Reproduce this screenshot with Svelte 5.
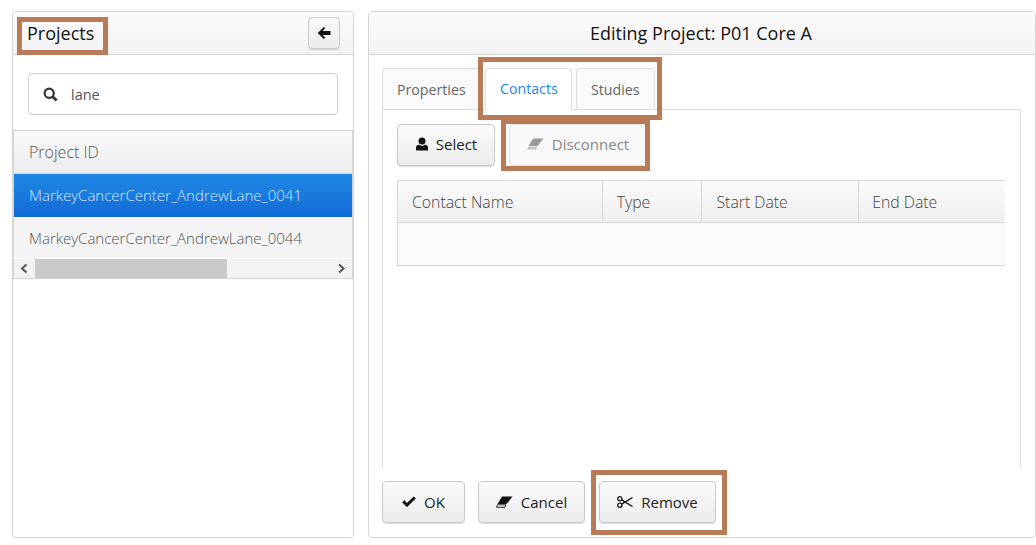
<script>
  const columns = [
    { name: 'Contact Name', width: 205 },
    { name: 'Type', width: 99 },
    { name: 'Start Date', width: 158 },
    { name: 'End Date', width: 146 }
  ];
</script>

<div class="page">
  <section class="panel left">
    <header class="head">
      <h2 class="title-left">Projects</h2>
      <button class="btn back" aria-label="Back">
        <svg width="14" height="14" viewBox="0 0 14 14"><path d="M7 0.8 L0.8 7 L7 13.2 L8 11.6 L5.6 9 L13.5 9 L13.5 5 L5.6 5 L8 2.4 Z" fill="#111"/></svg>
      </button>
    </header>
    <div class="search">
      <svg width="15" height="15" viewBox="0 0 15 15" fill="none" stroke="#333"><circle cx="6.2" cy="6.2" r="4.6" stroke-width="2.2"/><path d="M9.6 9.6 L13.6 13.6" stroke-width="2.8"/></svg>
      <span>lane</span>
    </div>
    <div class="grid">
      <div class="grid-head">Project ID</div>
      <div class="grid-row selected">MarkeyCancerCenter_AndrewLane_0041</div>
      <div class="grid-row plain">MarkeyCancerCenter_AndrewLane_0044</div>
      <div class="scroll">
        <svg width="21" height="19" viewBox="0 0 21 19" fill="none" stroke="#555" stroke-width="2"><path d="M12.5 5.5 L8 9.5 L12.5 13.5"/></svg>
        <div class="thumb"></div>
        <svg class="next" width="22" height="19" viewBox="0 0 22 19" fill="none" stroke="#555" stroke-width="2"><path d="M9 5.5 L13.5 9.5 L9 13.5"/></svg>
      </div>
    </div>
  </section>

  <section class="panel right">
    <header class="head center"><h2>Editing Project: P01 Core A</h2></header>
    <div class="body">
      <nav class="tabs">
        <div class="tab first">Properties</div>
        <div class="tab active">Contacts</div>
        <div class="tab">Studies</div>
      </nav>
      <div class="content">
        <div class="toolbar">
          <button class="btn tool select">
            <svg width="14" height="14" viewBox="0 0 14 14" fill="#111"><circle cx="7" cy="4" r="3.5"/><path d="M1 13.5 V10.5 Q1 8.2 4 7.8 L7 9 L10 7.8 Q13 8.2 13 10.5 V13.5 Z"/></svg>
            Select
          </button>
          <button class="btn tool disabled">
            <svg width="17" height="12" viewBox="0 0 17 12" fill="#999"><path d="M6 0.5 H16.5 L10.5 8 H1.5 Z"/><path d="M1.2 8.8 H10.2 L9 11.5 H0.3 Z" opacity=".6"/></svg>
            Disconnect
          </button>
        </div>
        <div class="table">
          <div class="thead">
            {#each columns as c}
              <div class="th" style="width:{c.width}px">{c.name}</div>
            {/each}
          </div>
          <div class="tbody"></div>
        </div>
      </div>
      <footer class="actions">
        <button class="btn foot ok">
          <svg width="14" height="11" viewBox="0 0 14 11" fill="none" stroke="#111" stroke-width="3"><path d="M1.2 5.2 L5 9 L12.8 1.5"/></svg>
          OK
        </button>
        <button class="btn foot cancel">
          <svg width="17" height="12" viewBox="0 0 17 12" fill="#111"><path d="M6 0.5 H16.5 L10.5 8 H1.5 Z"/><path d="M1.4 8.8 H10 L8.9 11.3 H0.6 Z" fill="none" stroke="#111" stroke-width=".9"/></svg>
          Cancel
        </button>
        <button class="btn foot remove">
          <svg width="16" height="12" viewBox="0 0 16 12" fill="none" stroke="#111" stroke-width="1.3"><circle cx="2.8" cy="2.8" r="2.1"/><circle cx="2.8" cy="9.2" r="2.1"/><path d="M4.6 3.9 L15.5 10.5 M4.6 8.1 L15.5 1.5"/></svg>
          Remove
        </button>
      </footer>
    </div>
  </section>

  <div class="mark m1"></div>
  <div class="mark m2"></div>
  <div class="mark m3"></div>
  <div class="mark m4"></div>
</div>

<style>
  :global(body) { margin: 0; background: #fff; }
  .page {
    position: relative;
    width: 1036px;
    height: 545px;
    box-sizing: border-box;
    padding: 11px 0 0 12px;
    display: flex;
    gap: 14px;
    overflow: hidden;
    font-family: "Open Sans", sans-serif;
    color: #333;
  }
  .panel {
    box-sizing: border-box;
    height: 527px;
    border: 1px solid #d5d5d5;
    border-radius: 4px;
    background: #fff;
    overflow: hidden;
  }
  .left { width: 342px; }
  .right { width: 668px; }
  .head {
    box-sizing: border-box;
    height: 43px;
    display: flex;
    align-items: center;
    justify-content: space-between;
    padding: 0 13px 0 14px;
    border-bottom: 1px solid #d5d5d5;
    background: linear-gradient(#fbfbfb, #f3f3f3);
  }
  .head.center { justify-content: center; padding: 0 16px 0 14px; }
  h2 { margin: 0; font-size: 18px; font-weight: 400; color: #111; }
  .btn {
    box-sizing: border-box;
    display: inline-flex;
    align-items: center;
    justify-content: center;
    gap: 8px;
    height: 42px;
    padding: 0 0 1px;
    border: 1px solid #c9c9c9;
    border-radius: 4px;
    background: linear-gradient(#fafafa, #ececec);
    box-shadow: 0 1px 1px rgba(0,0,0,.15);
    font: 400 15px "Open Sans", sans-serif;
    color: #222;
  }
  .back { width: 32px; height: 32px; padding: 0; }
  .search {
    box-sizing: border-box;
    margin: 18px 15px 15px;
    height: 42px;
    display: flex;
    align-items: center;
    gap: 13px;
    padding-left: 14px;
    border: 1px solid #ccc;
    border-radius: 4px;
    font-size: 14.5px;
    color: #555;
  }
  .grid {
    border: 1px solid #d5d5d5;
    font-weight: 300;
  }
  .grid-head, .grid-row {
    box-sizing: border-box;
    display: flex;
    align-items: center;
    padding-left: 15px;
    white-space: nowrap;
  }
  .grid-head {
    height: 43px;
    font-size: 16px;
    color: #555;
    background: linear-gradient(#fafafa, #ececec);
    border-bottom: 1px solid #d5d5d5;
  }
  .grid-row { height: 43px; padding-bottom: 2px; font-size: 15px; }
  .selected {
    color: #d5e6fb;
    background: linear-gradient(#1e88e5, #126bd5);
  }
  .plain { height: 41px; padding-bottom: 0; background: #f4f4f4; color: #555; }
  .scroll {
    height: 20px;
    display: flex;
    align-items: center;
    background: #f3f3f3;
    border-top: 1px solid #fff;
    box-sizing: border-box;
  }
  .scroll svg { flex: none; }
  .thumb { width: 192px; height: 19px; background: #cacaca; }
  .next { margin-left: auto; }
  .body {
    display: flex;
    flex-direction: column;
    padding: 13px 0 0 13px;
  }
  .tabs {
    display: flex;
    gap: 4px;
    height: 42px;
    box-sizing: border-box;
    position: relative;
    z-index: 1;
  }
  .tab {
    box-sizing: border-box;
    height: 41px;
    padding: 0 14px;
    display: flex;
    align-items: center;
    border: 1px solid #ddd;
    border-bottom: 0;
    border-radius: 4px 4px 0 0;
    background: #fafafa;
    font-size: 14.2px;
    color: #666;
  }
  .tab.first { width: 99px; }
  .tab.active {
    width: 87px;
    height: 42px;
    background: #fff;
    color: #2a85e8;
    padding-bottom: 2px;
  }
  .content {
    box-sizing: border-box;
    width: 639px;
    height: 358px;
    margin-top: -1px;
    padding: 14px 0 0 14px;
    border: 1px solid #ddd;
    border-bottom: 0;
  }
  .toolbar { display: flex; gap: 14px; }
  .tool { width: 98px; padding-bottom: 2px; }
  .select { gap: 7px; }
  .tool.disabled {
    width: 138px;
    color: #888;
    background: #f8f8f8;
    box-shadow: none;
    border-color: #e2e2e2;
  }
  .table {
    width: 608px;
    margin-top: 14px;
    border: solid #d8d8d8;
    border-width: 1px 0 1px 1px;
    box-sizing: border-box;
  }
  .thead {
    display: flex;
    height: 42px;
    box-sizing: border-box;
    background: linear-gradient(#fafafa, #efefef);
    border-bottom: 1px solid #d8d8d8;
  }
  .th {
    box-sizing: border-box;
    display: flex;
    align-items: center;
    padding-left: 14px;
    font-size: 15.8px;
    font-weight: 300;
    color: #444;
    border-right: 1px solid #d8d8d8;
  }
  .th:nth-child(3) { padding-left: 15px; }
  .th:last-child { border-right: 0; padding-left: 13px; }
  .tbody { height: 42px; background: #fafafa; }
  .actions { display: flex; gap: 13px; margin-top: 14px; }
  .ok { width: 83px; }
  .cancel { width: 107px; }
  .remove { width: 117px; margin-left: 1px; }
  .mark {
    position: absolute;
    box-sizing: border-box;
    border: 5px solid #b97a57;
    z-index: 5;
    pointer-events: none;
  }
  .m1 { left: 17px; top: 17px; width: 91px; height: 38px; }
  .m2 { left: 478px; top: 57px; width: 184px; height: 63px; }
  .m3 { left: 501px; top: 119px; width: 149px; height: 52px; }
  .m4 { left: 591px; top: 470px; width: 136px; height: 65px; }
</style>
